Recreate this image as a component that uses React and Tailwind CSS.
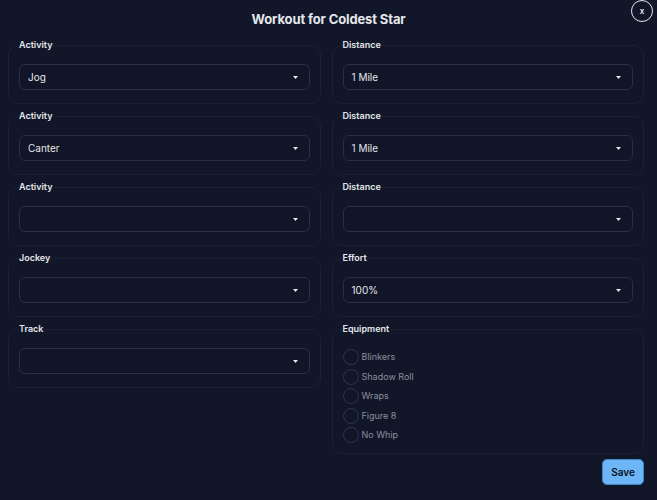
import React from 'react';

const left = [
  { label: 'Activity', value: 'Jog' },
  { label: 'Activity', value: 'Canter' },
  { label: 'Activity', value: '' },
  { label: 'Jockey', value: '' },
  { label: 'Track', value: '' },
];

const right = [
  { label: 'Distance', value: '1 Mile' },
  { label: 'Distance', value: '1 Mile' },
  { label: 'Distance', value: '' },
  { label: 'Effort', value: '100%' },
];

const equipment = ['Blinkers', 'Shadow Roll', 'Wraps', 'Figure 8', 'No Whip'];

function Card({ label, children, className = '' }) {
  return (
    <fieldset className={`border border-[#1b2033] rounded-[10px] px-[10px] ${className}`}>
      <legend className="text-[9px] leading-[12px] font-semibold text-[#e4e6ea]">{label}</legend>
      {children}
    </fieldset>
  );
}

function Select({ value }) {
  return (
    <div className="mt-[13px] mb-[13px] h-[26px] rounded-[6px] border border-[#2a2f44] bg-[#111528] flex items-center justify-between pl-[8px] pr-[11px]">
      <span className="text-[10px] text-[#e5e7eb]">{value}</span>
      <svg width="5" height="3" viewBox="0 0 5 3" className="text-[#e5e7eb]">
        <path d="M0 0h5L2.5 3z" fill="currentColor" />
      </svg>
    </div>
  );
}

export default function App() {
  return (
    <div className="w-[657px] h-[500px] bg-[#111629] relative overflow-hidden" style={{ fontFamily: 'Inter, "Noto Sans", sans-serif' }}>
      <button className="absolute left-[631px] top-[0px] w-[22px] h-[22px] rounded-full border-[1.5px] border-[#e5e7eb] text-[#e5e7eb] text-[8px] font-semibold flex items-center justify-center">
        x
      </button>
      <h1 className="text-center text-[13px] leading-[18px] font-bold tracking-[-0.01em] text-[#e4e6ea] pt-[10px]">Workout for Coldest Star</h1>
      <div className="pl-[8px] pr-[13px] mt-[11px]">
        <div className="grid grid-cols-2 gap-x-[11px]">
          <div className="flex flex-col gap-[6px]">
            {left.map((f, i) => (
              <Card key={i} label={f.label}>
                <Select value={f.value} />
              </Card>
            ))}
          </div>
          <div className="flex flex-col gap-[6px]">
            {right.map((f, i) => (
              <Card key={i} label={f.label}>
                <Select value={f.value} />
              </Card>
            ))}
            <Card label="Equipment">
              <div className="flex flex-col gap-[3.5px] mt-[14px] mb-[10px]">
                {equipment.map((e) => (
                  <label key={e} className="flex items-center gap-[3px]">
                    <span className="w-[16px] h-[16px] rounded-full border border-[#2e3447]" />
                    <span className="text-[9px] text-[#8b909c]">{e}</span>
                  </label>
                ))}
              </div>
            </Card>
          </div>
        </div>
        <div className="flex justify-end mt-[5px]">
          <button className="w-[42px] h-[26px] rounded-[5px] bg-[#6db6f6] border border-[#3d86c8] text-[10px] font-semibold text-[#0b1020]">
            Save
          </button>
        </div>
      </div>
    </div>
  );
}
